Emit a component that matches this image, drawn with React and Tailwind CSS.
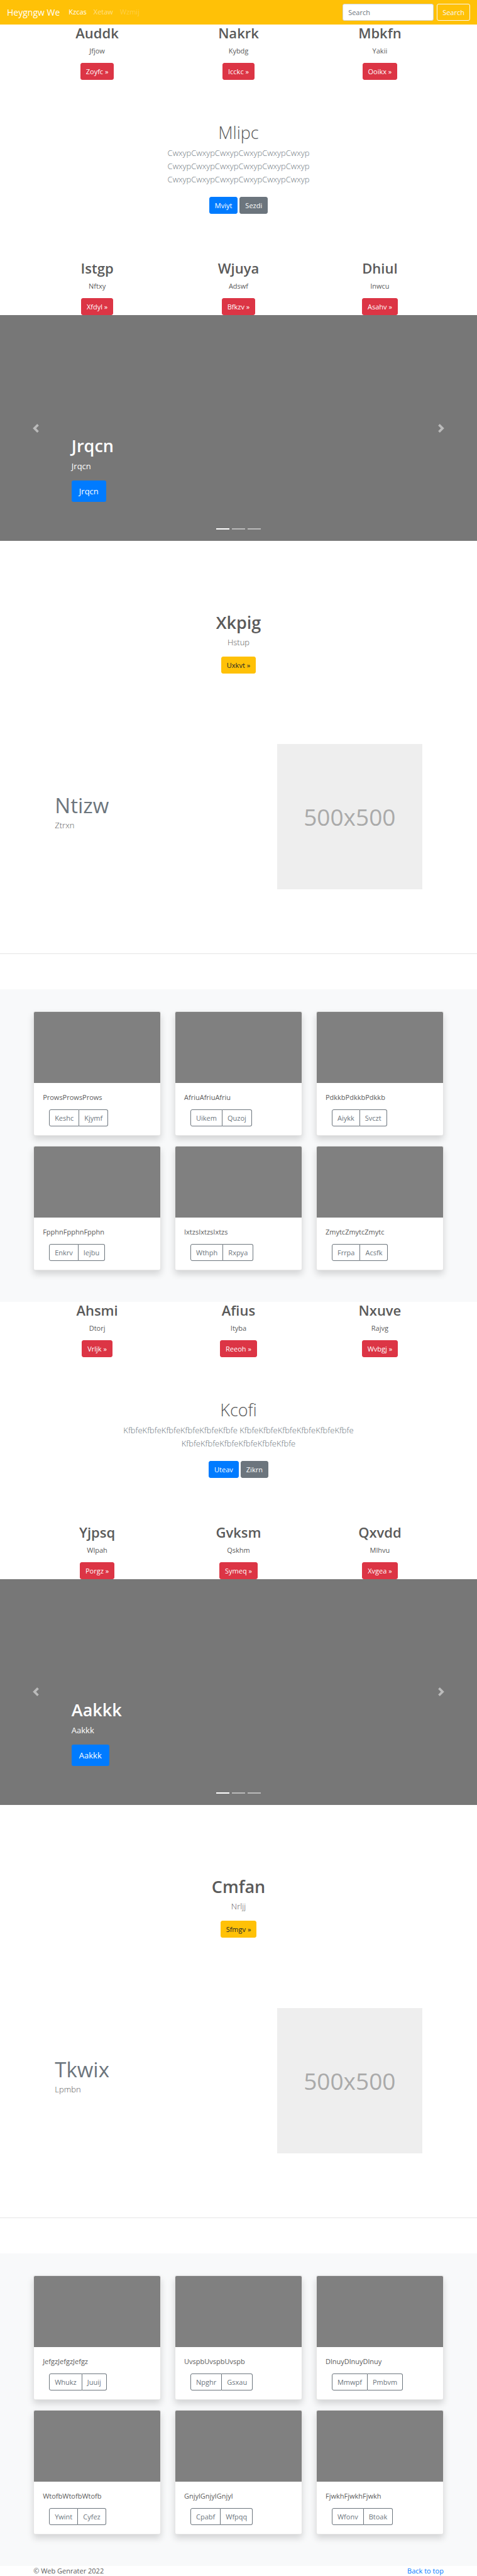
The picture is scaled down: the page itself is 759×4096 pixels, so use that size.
const halves = [
  {
    top: [
      ["Auddk", "Jfjow", "Zoyfc"],
      ["Nakrk", "Kybdg", "Icckc"],
      ["Mbkfn", "Yakii", "Ooikx"],
    ],
    intro: { title: "Mlipc", word: "Cwxyp", primary: "Mviyt", secondary: "Sezdi" },
    bottom: [
      ["Istgp", "Nftxy", "Xfdyl"],
      ["Wjuya", "Adswf", "Bfkzv"],
      ["Dhiul", "Inwcu", "Asahv"],
    ],
    slide: "Jrqcn",
    headline: ["Xkpig", "Hstup", "Uxkvt"],
    feature: ["Ntizw", "Ztrxn"],
    cards: [
      ["Prows", "Keshc", "Kjymf"],
      ["Afriu", "Uikem", "Quzoj"],
      ["Pdkkb", "Aiykk", "Svczt"],
      ["Fpphn", "Enkrv", "Iejbu"],
      ["Ixtzs", "Wthph", "Rxpya"],
      ["Zmytc", "Frrpa", "Acsfk"],
    ],
  },
  {
    top: [
      ["Ahsmi", "Dtorj", "Vrljk"],
      ["Afius", "Ityba", "Reeoh"],
      ["Nxuve", "Rajvg", "Wvbgj"],
    ],
    intro: { title: "Kcofi", word: "Kfbfe", primary: "Uteav", secondary: "Zikrn" },
    bottom: [
      ["Yjpsq", "Wlpah", "Porgz"],
      ["Gvksm", "Qskhm", "Symeq"],
      ["Qxvdd", "Mlhvu", "Xvgea"],
    ],
    slide: "Aakkk",
    headline: ["Cmfan", "Nrljj", "Sfmgv"],
    feature: ["Tkwix", "Lpmbn"],
    cards: [
      ["Jefgz", "Whukz", "Juuij"],
      ["Uvspb", "Npghr", "Gsxau"],
      ["Dlnuy", "Mmwpf", "Pmbvm"],
      ["Wtofb", "Ywint", "Cyfez"],
      ["Gnjyl", "Cpabf", "Wfpqq"],
      ["Fjwkh", "Wfonv", "Btoak"],
    ],
  },
];

const btn = "h-[27px] rounded-[3px] border px-2 text-[11px] leading-[25px]";

function Navbar() {
  return (
    <nav className="flex h-[39px] items-center bg-[#ffc107] px-[11px] text-[11px] text-white">
      <a href="#" className="mr-3.5 text-sm">Heygngw We</a>
      <div className="flex gap-[11px]">
        <a href="#">Kzcas</a>
        <a href="#" className="text-white/50">Xetaw</a>
        <a href="#" className="text-white/25">Wzmij</a>
      </div>
      <form className="ml-auto flex gap-[5px]">
        <input
          type="search"
          aria-label="Search"
          placeholder="Search"
          className="h-[27px] w-[145px] rounded-[3px] border border-[#ced4da] bg-white px-2 text-[11px] text-[#495057] placeholder:text-[#6c757d]"
        />
        <button type="button" className={`${btn} border-[#f8f9fa] text-[#f8f9fa]`}>Search</button>
      </form>
    </nav>
  );
}

function Columns({ items }) {
  return (
    <section className="grid grid-cols-3 gap-[22px] px-[7%] text-center">
      {items.map(([title, text, action]) => (
        <div key={title}>
          <h2 className="mb-1.5 text-[22px] leading-[27px] font-semibold">{title}</h2>
          <p className="mb-[11px] text-[11px] leading-[17px]">{text}</p>
          <a href="#" className={`${btn} mx-auto block w-fit border-[#dc3545] bg-[#dc3545] text-white`}>{action} »</a>
        </div>
      ))}
    </section>
  );
}

function Intro({ title, word, primary, secondary }) {
  const phrase = word.repeat(6);
  return (
    <section className="px-[7%] pt-[67px] pb-[73px] text-center">
      <h1 className="mb-[5px] text-[27px] leading-[34px] font-light">{title}</h1>
      <p className="mx-auto mb-[17px] max-w-[416px] text-[13px] leading-[21px] font-light text-[#6c757d]">
        {phrase} {phrase} {phrase}
      </p>
      <div className="flex justify-center gap-[3px]">
        <a href="#" className={`${btn} border-[#007bff] bg-[#007bff] text-white`}>{primary}</a>
        <a href="#" className={`${btn} border-[#6c757d] bg-[#6c757d] text-white`}>{secondary}</a>
      </div>
    </section>
  );
}

function Carousel({ text }) {
  return (
    <section className="relative flex h-[359px] flex-col items-start justify-end bg-[#777] px-[15%] pb-[62px] text-white">
      <h2 className="mb-[5px] text-[27px] leading-[34px] font-semibold">{text}</h2>
      <p className="mb-3 text-[13px] leading-[21px]">{text}</p>
      <a href="#" className="h-[34px] rounded-[3px] bg-[#007bff] px-3 text-[13px] leading-[34px]">{text}</a>
      <button type="button" aria-label="Previous" className="absolute inset-y-0 left-0 flex w-[15%] items-center justify-center opacity-50">
        <svg viewBox="0 0 8 8" className="size-[14px] fill-white">
          <path d="M5.25 0l-4 4 4 4 1.5-1.5L4.25 4l2.5-2.5L5.25 0z" />
        </svg>
      </button>
      <button type="button" aria-label="Next" className="absolute inset-y-0 right-0 flex w-[15%] items-center justify-center opacity-50">
        <svg viewBox="0 0 8 8" className="size-[14px] fill-white">
          <path d="M2.75 0l-1.5 1.5L3.75 4l-2.5 2.5L2.75 8l4-4-4-4z" />
        </svg>
      </button>
      <div className="absolute inset-x-0 bottom-[18px] flex justify-center gap-1">
        <button type="button" aria-label="Slide 1" className="h-0.5 w-[21px] bg-white" />
        <button type="button" aria-label="Slide 2" className="h-0.5 w-[21px] bg-white/50" />
        <button type="button" aria-label="Slide 3" className="h-0.5 w-[21px] bg-white/50" />
      </div>
    </section>
  );
}

function Headline({ items: [title, text, action] }) {
  return (
    <section className="pt-28 text-center">
      <h2 className="mb-1 text-[27px] leading-[35px] font-semibold">{title}</h2>
      <p className="mb-3 text-[13px] leading-[21px] font-light">{text}</p>
      <a href="#" className={`${btn} mx-auto block w-fit border-[#ffc107] bg-[#ffc107] text-[#212529]`}>{action} »</a>
    </section>
  );
}

function Feature({ items: [title, text] }) {
  return (
    <section className="flex items-center justify-between px-[11.5%] pt-28 pb-[102px]">
      <div>
        <h2 className="mb-0.5 text-[33px] leading-[38px] text-[#6c757d]">{title}</h2>
        <p className="mb-3 text-[13px] leading-[21px] font-light">{text}</p>
      </div>
      <div className="flex aspect-square w-[39.5%] items-center justify-center bg-[#eee] text-[37px] leading-none text-[#aaa]">
        500x500
      </div>
    </section>
  );
}

function Album({ cards }) {
  return (
    <section className="grid grid-cols-3 gap-x-[22px] gap-y-4 bg-[#f8f9fa] px-[7%] pt-[35px] pb-[50px]">
      {cards.map(([word, first, second]) => (
        <article key={word} className="overflow-hidden rounded-[3px] border border-black/10 bg-white shadow-[0_6px_11px_rgba(0,0,0,0.15)]">
          <div className="h-[113px] bg-[#808080]" />
          <div className="p-[14px]">
            <p className="mb-[11px] text-[11px] leading-[17px]">{word.repeat(3)}</p>
            <div className="ml-2.5 flex text-[#6c757d]">
              <button type="button" className={`${btn} rounded-r-none border-[#6c757d]`}>{first}</button>
              <button type="button" className={`${btn} rounded-l-none border-l-0 border-[#6c757d]`}>{second}</button>
            </div>
          </div>
        </article>
      ))}
    </section>
  );
}

export default function App() {
  return (
    <div className="bg-white font-['Open_Sans','Noto_Sans',sans-serif] text-[#5a5a5a]">
      <Navbar />
      <main>
        {halves.map((half) => (
          <div key={half.slide}>
            <Columns items={half.top} />
            <Intro {...half.intro} />
            <Columns items={half.bottom} />
            <Carousel text={half.slide} />
            <Headline items={half.headline} />
            <Feature items={half.feature} />
            <hr className="mb-14 border-black/10" />
            <Album cards={half.cards} />
          </div>
        ))}
      </main>
      <footer className="flex justify-between px-[7%] text-[11px] leading-4">
        <p>© Web Genrater 2022</p>
        <a href="#" className="text-[#007bff]">Back to top</a>
      </footer>
    </div>
  );
}
